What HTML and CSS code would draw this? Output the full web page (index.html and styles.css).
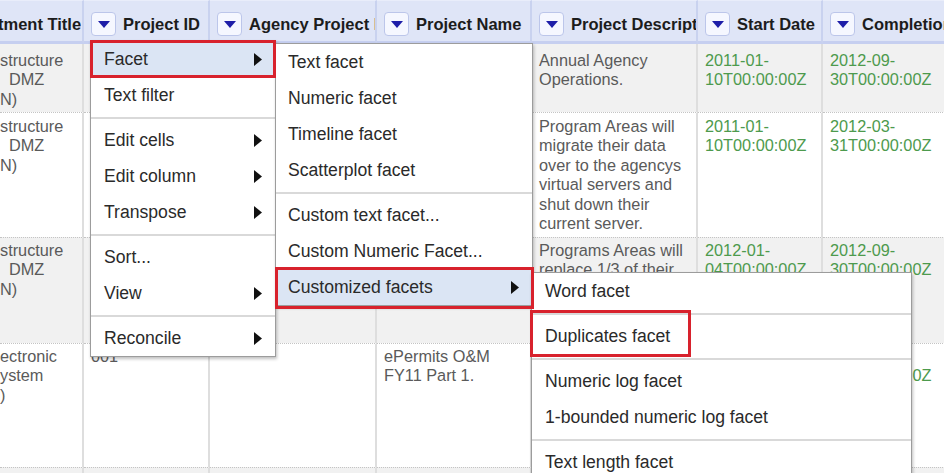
FILE: index.html
```html
<!DOCTYPE html>
<html>
<head>
<meta charset="utf-8">
<link rel="stylesheet" href="styles.css">
</head>
<body>
<div class="grid">
  <div class="h first"><span class="ht">tment Title</span></div>
  <div class="h"><span class="dd"><svg width="12" height="7" viewBox="0 0 12 7"><path d="M0 0H12L6 7Z"/></svg></span><span class="ht">Project ID</span></div>
  <div class="h"><span class="dd"><svg width="12" height="7" viewBox="0 0 12 7"><path d="M0 0H12L6 7Z"/></svg></span><span class="ht">Agency Project ID</span></div>
  <div class="h"><span class="dd"><svg width="12" height="7" viewBox="0 0 12 7"><path d="M0 0H12L6 7Z"/></svg></span><span class="ht">Project Name</span></div>
  <div class="h"><span class="dd"><svg width="12" height="7" viewBox="0 0 12 7"><path d="M0 0H12L6 7Z"/></svg></span><span class="ht">Project Description</span></div>
  <div class="h"><span class="dd"><svg width="12" height="7" viewBox="0 0 12 7"><path d="M0 0H12L6 7Z"/></svg></span><span class="ht">Start Date</span></div>
  <div class="h"><span class="dd"><svg width="12" height="7" viewBox="0 0 12 7"><path d="M0 0H12L6 7Z"/></svg></span><span class="ht">Completion Date</span></div>

  <div class="c c0 r1">structure<br>&nbsp;&nbsp;DMZ<br>N)</div>
  <div class="c r1">001</div>
  <div class="c r1"></div>
  <div class="c r1">Agency Operations</div>
  <div class="c r1">Annual Agency<br>Operations.</div>
  <div class="c r1 d">2011-01-<br>10T00:00:00Z</div>
  <div class="c r1 d">2012-09-<br>30T00:00:00Z</div>

  <div class="c c0 r2">structure<br>&nbsp;&nbsp;DMZ<br>N)</div>
  <div class="c r2">002</div>
  <div class="c r2"></div>
  <div class="c r2">Server Migration</div>
  <div class="c r2">Program Areas will<br>migrate their data<br>over to the agencys<br>virtual servers and<br>shut down their<br>current server.</div>
  <div class="c r2 d">2011-01-<br>10T00:00:00Z</div>
  <div class="c r2 d">2012-03-<br>31T00:00:00Z</div>

  <div class="c c0 r3">structure<br>&nbsp;&nbsp;DMZ<br>N)</div>
  <div class="c r3">003</div>
  <div class="c r3"></div>
  <div class="c r3">Server Refresh</div>
  <div class="c r3">Programs Areas will<br>replace 1/3 of their<br>servers.</div>
  <div class="c r3 d">2012-01-<br>04T00:00:00Z</div>
  <div class="c r3 d">2012-09-<br>30T00:00:00Z</div>

  <div class="c c0 r4">ectronic<br>ystem<br>)</div>
  <div class="c r4">001</div>
  <div class="c r4"></div>
  <div class="c r4">ePermits O&amp;M<br>FY11 Part 1.</div>
  <div class="c r4">ePermits O&amp;M.</div>
  <div class="c r4 d">2010-10-<br>01T00:00:00Z</div>
  <div class="c r4 d">2011-09-<br>30T00:00:00Z</div>

  <div class="c c0 r5"></div>
  <div class="c r5"></div>
  <div class="c r5"></div>
  <div class="c r5"></div>
  <div class="c r5"></div>
  <div class="c r5"></div>
  <div class="c r5"></div>
</div>

<div class="menu m1">
  <div class="item on"><span>Facet</span><svg class="ar" width="8" height="13" viewBox="0 0 8 13"><path d="M0 0L8 6.5L0 13Z"/></svg></div>
  <div class="item"><span>Text filter</span></div>
  <div class="sep"></div>
  <div class="item"><span>Edit cells</span><svg class="ar" width="8" height="13" viewBox="0 0 8 13"><path d="M0 0L8 6.5L0 13Z"/></svg></div>
  <div class="item"><span>Edit column</span><svg class="ar" width="8" height="13" viewBox="0 0 8 13"><path d="M0 0L8 6.5L0 13Z"/></svg></div>
  <div class="item"><span>Transpose</span><svg class="ar" width="8" height="13" viewBox="0 0 8 13"><path d="M0 0L8 6.5L0 13Z"/></svg></div>
  <div class="sep"></div>
  <div class="item"><span>Sort...</span></div>
  <div class="item"><span>View</span><svg class="ar" width="8" height="13" viewBox="0 0 8 13"><path d="M0 0L8 6.5L0 13Z"/></svg></div>
  <div class="sep"></div>
  <div class="item"><span>Reconcile</span><svg class="ar" width="8" height="13" viewBox="0 0 8 13"><path d="M0 0L8 6.5L0 13Z"/></svg></div>
</div>

<div class="menu m2">
  <div class="item"><span>Text facet</span></div>
  <div class="item"><span>Numeric facet</span></div>
  <div class="item"><span>Timeline facet</span></div>
  <div class="item"><span>Scatterplot facet</span></div>
  <div class="sep"></div>
  <div class="item"><span>Custom text facet...</span></div>
  <div class="item"><span>Custom Numeric Facet...</span></div>
  <div class="item on"><span>Customized facets</span><svg class="ar" width="8" height="13" viewBox="0 0 8 13"><path d="M0 0L8 6.5L0 13Z"/></svg></div>
</div>

<div class="menu m3">
  <div class="item"><span>Word facet</span></div>
  <div class="sep"></div>
  <div class="item"><span>Duplicates facet</span></div>
  <div class="sep"></div>
  <div class="item"><span>Numeric log facet</span></div>
  <div class="item"><span>1-bounded numeric log facet</span></div>
  <div class="sep"></div>
  <div class="item"><span>Text length facet</span></div>
</div>

<div class="rb rb1"></div>
<div class="rb rb2"></div>
<div class="rb rb3"></div>
</body>
</html>
```
FILE: styles.css
```css
* { box-sizing: border-box; }
html, body { margin: 0; padding: 0; }
body {
  width: 944px;
  height: 473px;
  overflow: hidden;
  position: relative;
  background: #fff;
  font-family: "Liberation Sans", Arial, sans-serif;
}
.grid {
  display: grid;
  grid-template-columns: 84px 126px 167px 155px 166px 125px 220px;
  grid-template-rows: 44px 68px 125px 106px 124px 30px;
  width: max-content;
}
.h {
  background: #dfe5f7;
  border-top: 1px solid #e9edfa;
  border-right: 2px solid #c9d2ef;
  border-bottom: 3px solid #c6cff0;
  display: flex;
  align-items: center;
  gap: 7px;
  padding-left: 7px;
  padding-top: 6px;
  font-weight: bold;
  font-size: 16.5px;
  color: #1c1c1c;
  white-space: nowrap;
  overflow: hidden;
}
.h.first { padding-left: 0; }
.h.first .ht { margin-left: -2px; }
.dd {
  flex: none;
  width: 25px;
  height: 24px;
  border: 1px solid #bcc6ea;
  border-radius: 4px;
  background: #f5f7ff;
  display: flex;
  align-items: center;
  justify-content: center;
}
.dd svg { fill: #1e1ea8; }
.c {
  padding: 5px 7px 0;
  border-right: 2px solid #dedede;
  font-size: 16.3px;
  line-height: 19.4px;
  color: #5a5a5a;
  white-space: nowrap;
  overflow: hidden;
}
.c0 { padding-left: 0; }
.r1 { background: #f1f1f1; padding-top: 7px; }
.r2 { background: #fff; border-top: 1px dotted #c4c4c4; padding-top: 4px; }
.r3 { background: #f1f1f1; border-top: 1px dotted #c4c4c4; padding-top: 3px; }
.r4 { background: #fff; border-top: 1px dotted #c4c4c4; padding-top: 3px; }
.r5 { background: #f1f1f1; border-top: 1px dotted #c4c4c4; }
.d { color: #4d9a4d; }

.menu {
  position: absolute;
  background: #fff;
  border: 1px solid #9c9c9c;
  box-shadow: 1px 2px 3px rgba(0, 0, 0, 0.25);
  font-size: 17.6px;
  color: #2a2a2a;
}
.m1 { left: 90px; top: 40px; width: 186px; }
.m2 { left: 275px; top: 43px; width: 258px; }
.m3 { left: 531px; top: 272px; width: 381px; height: 230px; }
.item {
  height: 36px;
  display: flex;
  align-items: center;
  justify-content: space-between;
  padding: 0 13px;
  white-space: nowrap;
}
.m2 .item { padding-left: 12px; }
.item.on { background: #dbe5f4; }
.ar { fill: #111; flex: none; }
.sep {
  height: 9px;
  display: flex;
  align-items: center;
}
.sep::before {
  content: "";
  flex: 1;
  height: 2px;
  background: #d9d9d9;
}
.rb {
  position: absolute;
  border: 3px solid #d8222d;
}
.rb1 { left: 90px; top: 40px; width: 186px; height: 38px; }
.rb2 { left: 275px; top: 267px; width: 259px; height: 42px; }
.rb3 { left: 530px; top: 310px; width: 161px; height: 47px; }
```
